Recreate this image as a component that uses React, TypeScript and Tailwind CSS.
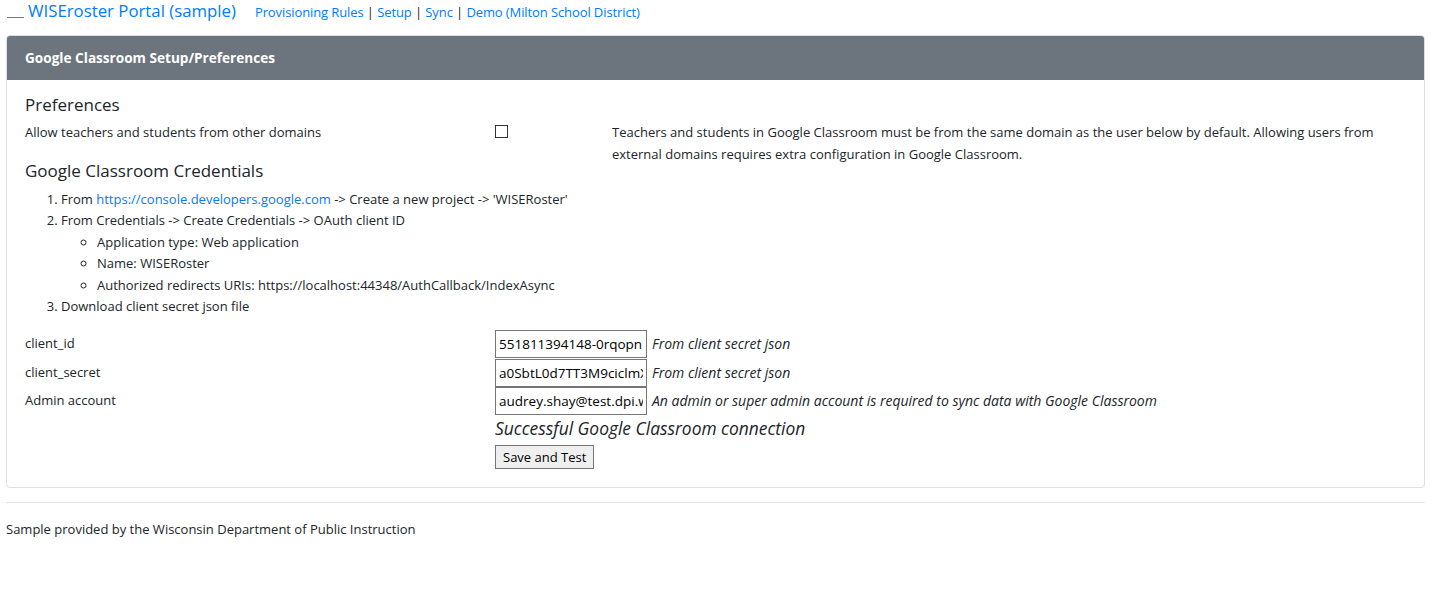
const font = "font-['Open_Sans','Noto_Sans',sans-serif]";

function FieldRow({ label, value, hint }: { label: string; value: string; hint: string }) {
  return (
    <div className="grid grid-cols-[470px_1fr] items-center">
      <div className="self-start pt-[2px]">{label}</div>
      <div className="flex items-center">
        <input
          readOnly
          value={value}
          className="w-[152px] h-[28px] border border-[#767676] px-[3px] text-[13.5px] text-black outline-none"
        />
        <span className="ml-[5px] italic text-[14px]">{hint}</span>
      </div>
    </div>
  );
}

export default function App() {
  return (
    <div className={`${font} text-[13px] text-[#212529] bg-white min-h-[594px] pl-[6px] pr-[13px]`}>
      {/* Top nav */}
      <div className="flex items-end h-[20px]">
        <span className="w-[17px] h-[1px] bg-[#777] ml-[1px] mb-[2px]" />
        <a className="ml-[4px] text-[16.8px] text-[#007bff] leading-none">WISEroster Portal (sample)</a>
        <div className="ml-[19px] text-[13px] leading-none mb-[1px] tracking-[-0.1px]">
          <a className="text-[#007bff]">Provisioning Rules</a> |{' '}
          <a className="text-[#007bff]">Setup</a> |{' '}
          <a className="text-[#007bff]">Sync</a> |{' '}
          <a className="text-[#007bff]">Demo (Milton School District)</a>
        </div>
      </div>

      {/* Card */}
      <div className="mt-[15px] border border-[#dfdfdf] rounded-[4px] overflow-hidden">
        <div className="bg-[#6c757d] h-[44px] flex items-center px-[18px] text-white font-bold text-[13.6px]">
          Google Classroom Setup/Preferences
        </div>
        <div className="px-[18px] pt-[14px] pb-[18px] leading-[22px]">
          <h4 className="text-[17px] leading-[22px]">Preferences</h4>
          <div className="grid grid-cols-[470px_117px_1fr] mt-[5px]">
            <div>Allow teachers and students from other domains</div>
            <div className="pt-[4px]">
              <div className="w-[13px] h-[13px] border border-[#333] bg-white" />
            </div>
            <div>
              Teachers and students in Google Classroom must be from the same domain as the user below by default. Allowing users from external domains requires extra configuration in Google Classroom.
            </div>
          </div>

          <h4 className="text-[17px] leading-[22px] mt-[-5px]">Google Classroom Credentials</h4>
          <ol className="list-decimal pl-[36px] mt-[7px] leading-[21.4px]">
            <li>
              From <a className="text-[#007bff]">https://console.developers.google.com</a> -&gt; Create a new project -&gt; 'WISERoster'
            </li>
            <li>
              From Credentials -&gt; Create Credentials -&gt; OAuth client ID
              <ul className="list-[circle] pl-[36px]">
                <li>Application type: Web application</li>
                <li>Name: WISERoster</li>
                <li>Authorized redirects URIs: https://localhost:44348/AuthCallback/IndexAsync</li>
              </ul>
            </li>
            <li>Download client secret json file</li>
          </ol>

          <div className="mt-[13px] flex flex-col gap-[0.5px]">
            <FieldRow label="client_id" value="551811394148-0rqopnk2s9" hint="From client secret json" />
            <FieldRow label="client_secret" value="a0SbtL0d7TT3M9ciclmXq" hint="From client secret json" />
            <FieldRow
              label="Admin account"
              value="audrey.shay@test.dpi.wi.gov"
              hint="An admin or super admin account is required to sync data with Google Classroom"
            />
          </div>
          <div className="pl-[470px]">
            <div className="italic text-[17.4px] leading-[26px]">Successful Google Classroom connection</div>
            <button className="mt-[4px] h-[24px] px-[7px] bg-[#efefef] border border-[#767676] text-[13px] text-black leading-none">
              Save and Test
            </button>
          </div>
        </div>
      </div>

      <hr className="mt-[14px] border-[#e5e5e5]" />
      <div className="mt-[17px]">Sample provided by the Wisconsin Department of Public Instruction</div>
    </div>
  );
}
